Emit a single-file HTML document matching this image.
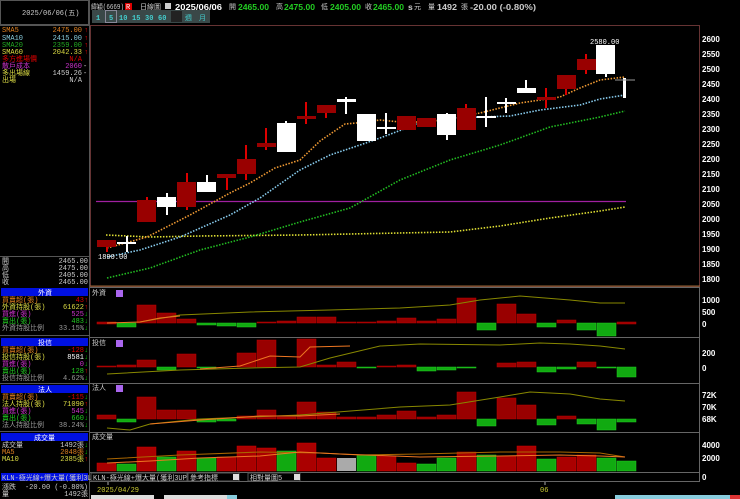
<!DOCTYPE html>
<html><head><meta charset="utf-8">
<style>
html,body{margin:0;padding:0;background:#000;width:740px;height:499px;overflow:hidden}
svg{display:block}
text{font-family:"Liberation Mono","Noto Sans CJK TC",monospace;font-size:7px}
.b{font-family:"Liberation Sans","Noto Sans CJK TC",sans-serif;font-weight:bold;font-size:8.5px}
.ax{font-family:"Liberation Sans",sans-serif;font-weight:bold;font-size:8px;fill:#fff}
</style></head><body>
<svg width="740" height="499" viewBox="0 0 740 499" xmlns="http://www.w3.org/2000/svg">
<rect width="740" height="499" fill="#000"/>
<!-- left panel -->
<rect x="0.5" y="0.5" width="88" height="24" fill="#000" stroke="#555"/>
<text x="22" y="15" fill="#ccc">2025/06/06(五)</text>
<line x1="0" y1="25.5" x2="89" y2="25.5" stroke="#555"/>
<line x1="89.5" y1="0" x2="89.5" y2="499" stroke="#555"/>
<g>
<text x="2" y="32" fill="#e08020">SMA5</text><text x="82" y="32" fill="#e08020" text-anchor="end">2475.00</text><text x="84" y="32" fill="#f00">↑</text>
<text x="2" y="40" fill="#8cd">SMA10</text><text x="82" y="40" fill="#8cd" text-anchor="end">2415.00</text><text x="84" y="40" fill="#f00">↑</text>
<text x="2" y="47" fill="#2a2">SMA20</text><text x="82" y="47" fill="#2a2" text-anchor="end">2359.00</text><text x="84" y="47" fill="#f00">↑</text>
<text x="2" y="54" fill="#dd4">SMA60</text><text x="82" y="54" fill="#dd4" text-anchor="end">2042.33</text><text x="84" y="54" fill="#f00">↑</text>
<text x="2" y="61" fill="#d00">多方進場價</text><text x="82" y="61" fill="#d00" text-anchor="end">N/A</text>
<text x="2" y="68" fill="#c3c">散戶成本</text><text x="82" y="68" fill="#c3c" text-anchor="end">2060</text><text x="83" y="68" fill="#ccc">-</text>
<text x="2" y="75" fill="#dd4">多出場線</text><text x="82" y="75" fill="#ccc" text-anchor="end">1459.26</text><text x="83" y="75" fill="#ccc">-</text>
<text x="2" y="82" fill="#dd4">出場</text><text x="82" y="82" fill="#ccc" text-anchor="end">N/A</text>
</g>
<line x1="0" y1="256.5" x2="89" y2="256.5" stroke="#555"/>
<text x="2" y="263" fill="#ccc">開</text><text x="88" y="263" fill="#ccc" text-anchor="end">2465.00</text>
<text x="2" y="270" fill="#ccc">高</text><text x="88" y="270" fill="#ccc" text-anchor="end">2475.00</text>
<text x="2" y="277" fill="#ccc">低</text><text x="88" y="277" fill="#ccc" text-anchor="end">2405.00</text>
<text x="2" y="284" fill="#ccc">收</text><text x="88" y="284" fill="#ccc" text-anchor="end">2465.00</text>
<!-- 外資 -->
<rect x="1" y="288" width="87" height="8" fill="#0010e0"/><text x="38" y="295" fill="#fff">外資</text>
<text x="2" y="302" fill="#e08020">買賣超(張)</text><text x="84" y="302" fill="#d00" text-anchor="end">43</text><text x="84" y="302" fill="#f00">↑</text>
<text x="2" y="309" fill="#dd4">外資持股(張)</text><text x="84" y="309" fill="#dd4" text-anchor="end">61622</text><text x="84" y="309" fill="#f00">↑</text>
<text x="2" y="316" fill="#c3c">買進(張)</text><text x="84" y="316" fill="#c3c" text-anchor="end">525</text><text x="84" y="316" fill="#0c0">↓</text>
<text x="2" y="323" fill="#2c2">賣出(張)</text><text x="84" y="323" fill="#2c2" text-anchor="end">483</text><text x="84" y="323" fill="#0c0">↓</text>
<text x="2" y="330" fill="#999">外資持股比例</text><text x="84" y="330" fill="#999" text-anchor="end">33.15%</text><text x="84" y="330" fill="#0c0">↓</text>
<line x1="0" y1="335.5" x2="89" y2="335.5" stroke="#555"/>
<!-- 投信 -->
<rect x="1" y="338" width="87" height="8" fill="#0010e0"/><text x="38" y="345" fill="#fff">投信</text>
<text x="2" y="352" fill="#e08020">買賣超(張)</text><text x="84" y="352" fill="#d00" text-anchor="end">-128</text><text x="84" y="352" fill="#0c0">↓</text>
<text x="2" y="359" fill="#dd4">投信持股(張)</text><text x="84" y="359" fill="#fff" text-anchor="end">8581</text><text x="84" y="359" fill="#0c0">↓</text>
<text x="2" y="366" fill="#c3c">買進(張)</text><text x="84" y="366" fill="#c3c" text-anchor="end">0</text><text x="84" y="366" fill="#0c0">↓</text>
<text x="2" y="373" fill="#2c2">賣出(張)</text><text x="84" y="373" fill="#2c2" text-anchor="end">128</text><text x="84" y="373" fill="#f00">↑</text>
<text x="2" y="380" fill="#999">投信持股比例</text><text x="84" y="380" fill="#999" text-anchor="end">4.62%</text><text x="84" y="380" fill="#0c0">↓</text>
<line x1="0" y1="383.5" x2="89" y2="383.5" stroke="#555"/>
<!-- 法人 -->
<rect x="1" y="385" width="87" height="8" fill="#0010e0"/><text x="38" y="392" fill="#fff">法人</text>
<text x="2" y="399" fill="#e08020">買賣超(張)</text><text x="84" y="399" fill="#d00" text-anchor="end">-115</text><text x="84" y="399" fill="#0c0">↓</text>
<text x="2" y="406" fill="#dd4">法人持股(張)</text><text x="84" y="406" fill="#dd4" text-anchor="end">71090</text><text x="84" y="406" fill="#f00">↑</text>
<text x="2" y="413" fill="#c3c">買進(張)</text><text x="84" y="413" fill="#c3c" text-anchor="end">545</text><text x="84" y="413" fill="#0c0">↓</text>
<text x="2" y="420" fill="#2c2">賣出(張)</text><text x="84" y="420" fill="#2c2" text-anchor="end">660</text><text x="84" y="420" fill="#0c0">↓</text>
<text x="2" y="427" fill="#999">法人持股比例</text><text x="84" y="427" fill="#999" text-anchor="end">38.24%</text><text x="84" y="427" fill="#0c0">↓</text>
<line x1="0" y1="431.5" x2="89" y2="431.5" stroke="#555"/>
<!-- 成交量 -->
<rect x="1" y="433" width="87" height="8" fill="#0010e0"/><text x="34" y="440" fill="#fff">成交量</text>
<text x="2" y="447" fill="#ccc">成交量</text><text x="84" y="447" fill="#ccc" text-anchor="end">1492張</text><text x="84" y="447" fill="#0c0">↓</text>
<text x="2" y="454" fill="#e08020">MA5</text><text x="84" y="454" fill="#e08020" text-anchor="end">2048張</text><text x="84" y="454" fill="#0c0">↓</text>
<text x="2" y="461" fill="#dd4">MA10</text><text x="84" y="461" fill="#dd4" text-anchor="end">2385張</text><text x="84" y="461" fill="#f00">↑</text>
<rect x="1" y="473" width="87" height="8" fill="#0010e0"/><text x="2" y="480" fill="#ccc" font-size="6.5">KLN-極光線+爆大量(獲利3UP)</text>
<text x="2" y="489" fill="#ccc">漲跌</text><text x="88" y="489" fill="#ccc" text-anchor="end">-20.00 (-0.80%)</text>
<text x="2" y="496" fill="#ccc">量</text><text x="88" y="496" fill="#ccc" text-anchor="end">1492張</text>

<!-- header -->
<text x="91" y="9" fill="#ccc" textLength="33" lengthAdjust="spacingAndGlyphs">緯穎(6669)</text>
<rect x="125" y="3" width="7" height="7" fill="#d00"/><text x="126" y="9" fill="#fff" font-size="6">R</text>
<text x="140" y="9" fill="#ccc">日線圖</text>
<rect x="165" y="3" width="6" height="6" fill="#ccc"/>
<text x="175" y="10" class="b" fill="#fff" font-size="9.5" textLength="47" lengthAdjust="spacingAndGlyphs">2025/06/06</text>
<text x="229" y="9" fill="#ccc">開</text><text x="238" y="10" class="b" fill="#2c2" textLength="31" lengthAdjust="spacingAndGlyphs">2465.00</text>
<text x="276" y="9" fill="#ccc">高</text><text x="284" y="10" class="b" fill="#2c2" textLength="31" lengthAdjust="spacingAndGlyphs">2475.00</text>
<text x="321" y="9" fill="#ccc">低</text><text x="330" y="10" class="b" fill="#2c2" textLength="31" lengthAdjust="spacingAndGlyphs">2405.00</text>
<text x="365" y="9" fill="#ccc">收</text><text x="373" y="10" class="b" fill="#2c2" textLength="31" lengthAdjust="spacingAndGlyphs">2465.00</text>
<text x="408" y="10" class="b" fill="#ccc">s</text><text x="414" y="9" fill="#ccc">元</text>
<text x="428" y="9" fill="#ccc">量</text><text x="437" y="10" class="b" fill="#ccc" textLength="20" lengthAdjust="spacingAndGlyphs">1492</text><text x="461" y="9" fill="#ccc">張</text>
<text x="470" y="10" class="b" fill="#ccc" textLength="66" lengthAdjust="spacingAndGlyphs">-20.00 (-0.80%)</text>
<!-- toolbar -->
<rect x="92" y="10" width="118" height="13" fill="#3a4848"/>
<g fill="#4cc" font-size="8.5" font-weight="bold">
<text x="96" y="20">1</text><text x="109" y="20">5</text><text x="119" y="20">10</text><text x="132" y="20">15</text><text x="145" y="20">30</text><text x="158" y="20">60</text>
<text x="185" y="20" font-size="6" font-weight="normal">週</text><text x="199" y="20" font-size="6" font-weight="normal">月</text></g>
<rect x="171" y="11" width="11" height="11" fill="#222"/>
<rect x="105.5" y="10.5" width="11" height="12" fill="none" stroke="#889"/>

<!-- chart frame -->
<rect x="90.5" y="25.5" width="609" height="261" fill="none" stroke="#633"/>
<line x1="90" y1="286" x2="700" y2="286" stroke="#963"/>
<g stroke="#666"><line x1="90" y1="287.5" x2="700" y2="287.5"/><line x1="90" y1="337.5" x2="700" y2="337.5"/><line x1="90" y1="383.5" x2="700" y2="383.5"/><line x1="90" y1="432.5" x2="700" y2="432.5"/><line x1="90" y1="472.5" x2="700" y2="472.5"/><line x1="90" y1="481.5" x2="700" y2="481.5"/><line x1="699.5" y1="287" x2="699.5" y2="482"/></g>

<!-- axis labels -->
<g class="ax">
<text x="702" y="42" class="ax">2600</text><text x="702" y="57" class="ax">2550</text><text x="702" y="72" class="ax">2500</text><text x="702" y="87" class="ax">2450</text><text x="702" y="102" class="ax">2400</text><text x="702" y="117" class="ax">2350</text><text x="702" y="132" class="ax">2300</text><text x="702" y="147" class="ax">2250</text><text x="702" y="162" class="ax">2200</text><text x="702" y="177" class="ax">2150</text><text x="702" y="192" class="ax">2100</text><text x="702" y="207" class="ax">2050</text><text x="702" y="222" class="ax">2000</text><text x="702" y="237" class="ax">1950</text><text x="702" y="252" class="ax">1900</text><text x="702" y="267" class="ax">1850</text><text x="702" y="282" class="ax">1800</text>
<text x="702" y="303" class="ax">1000</text><text x="702" y="315" class="ax">500</text><text x="702" y="327" class="ax">0</text>
<text x="702" y="356" class="ax">200</text><text x="702" y="371" class="ax">0</text>
<text x="702" y="398" class="ax">72K</text><text x="702" y="410" class="ax">70K</text><text x="702" y="422" class="ax">68K</text>
<text x="702" y="448" class="ax">4000</text><text x="702" y="461" class="ax">2000</text><text x="702" y="480" class="ax">0</text>
</g>

<!-- MA lines -->
<line x1="96" y1="201.5" x2="626" y2="201.5" stroke="#a020a0" stroke-width="1.2"/>
<g fill="none" stroke-width="1.6" stroke-dasharray="1.5 1.5">
<polyline stroke="#dd3" points="106,235 150,237 200,236 300,235 400,233 450,232 500,226 550,218 600,211 625,207"/>
<polyline stroke="#2b2" points="107,278 150,268 200,250 250,237 300,222 350,208 400,180 450,160 500,145 550,127 600,117 625,111"/>
<polyline stroke="#8ce" points="107,257 140,250 180,237 230,215 260,198 300,170 330,155 360,145 380,138 420,123 450,118 480,117 510,116 540,110 580,105 600,99 625,95"/>
<polyline stroke="#e93" points="107,248 147,237 190,215 230,193 250,183 275,168 300,160 320,141 345,124 356,123 380,120 400,122 430,122 480,113 520,103 560,97 580,88 600,80 625,77"/>
</g>

<!-- candles -->
<g>
<g fill="#d00">
<rect x="106" y="240" width="2" height="12"/><rect x="146" y="197" width="2" height="25"/><rect x="186" y="173" width="2" height="37"/><rect x="226" y="174" width="2" height="16"/><rect x="245" y="145" width="2" height="35"/><rect x="265" y="128" width="2" height="22"/><rect x="305" y="102" width="2" height="22"/><rect x="325" y="105" width="2" height="13"/><rect x="465" y="104" width="2" height="26"/><rect x="545" y="88" width="2" height="20"/><rect x="565" y="75" width="2" height="20"/><rect x="585" y="54" width="2" height="20"/>
</g>
<g fill="#900">
<rect x="97" y="240" width="19" height="7"/><rect x="137" y="200" width="19" height="22"/><rect x="177" y="182" width="19" height="25"/><rect x="217" y="174" width="19" height="4"/><rect x="237" y="159" width="19" height="15"/><rect x="257" y="143" width="19" height="4"/><rect x="297" y="116" width="19" height="3"/><rect x="317" y="105" width="19" height="8"/><rect x="397" y="116" width="19" height="14"/><rect x="417" y="118" width="19" height="9"/><rect x="457" y="108" width="19" height="22"/><rect x="537" y="97" width="19" height="3"/><rect x="557" y="75" width="19" height="14"/><rect x="577" y="59" width="19" height="11"/>
</g>
<g fill="#fff">
<rect x="126" y="236" width="2" height="16"/><rect x="117" y="242" width="19" height="2"/>
<rect x="166" y="193" width="2" height="22"/><rect x="157" y="197" width="19" height="10"/>
<rect x="206" y="175" width="2" height="17"/><rect x="197" y="182" width="19" height="10"/>
<rect x="285" y="121" width="2" height="31"/><rect x="277" y="123" width="19" height="29"/>
<rect x="345" y="97" width="2" height="17"/><rect x="337" y="99" width="19" height="3"/>
<rect x="357" y="114" width="19" height="27"/>
<rect x="385" y="113" width="2" height="21"/><rect x="377" y="127" width="19" height="2"/>
<rect x="446" y="113" width="2" height="27"/><rect x="437" y="114" width="19" height="21"/>
<rect x="485" y="97" width="2" height="30"/><rect x="477" y="116" width="19" height="2"/>
<rect x="505" y="98" width="2" height="15"/><rect x="497" y="102" width="19" height="2"/>
<rect x="525" y="80" width="2" height="13"/><rect x="517" y="88" width="19" height="5"/>
<rect x="605" y="45" width="2" height="32"/><rect x="596" y="45" width="19" height="29"/>
<rect x="623" y="78" width="3" height="20"/>
</g>
<line x1="615" y1="80" x2="635" y2="80" stroke="#999"/>
<text x="590" y="44" fill="#fff" font-family="Liberation Sans" font-size="8">2580.00</text>
<text x="98" y="259" fill="#fff" font-family="Liberation Sans" font-size="8">1890.00</text>
</g>

<!-- panel labels -->
<text x="92" y="295" fill="#ccc">外資</text><rect x="116" y="290" width="7" height="7" fill="#a6e"/>
<text x="92" y="345" fill="#ccc">投信</text><rect x="116" y="340" width="7" height="7" fill="#a6e"/>
<text x="92" y="390" fill="#ccc">法人</text><rect x="116" y="385" width="7" height="7" fill="#a6e"/>
<text x="92" y="439" fill="#ccc">成交量</text>

<!-- panel 1 -->
<g fill="#900" stroke="#b00" stroke-width="0.5">
<rect x="97" y="322" width="19" height="2"/><rect x="137" y="305" width="19" height="18"/><rect x="157" y="313" width="19" height="10"/><rect x="177" y="319" width="19" height="4"/><rect x="257" y="322" width="19" height="1"/><rect x="277" y="321" width="19" height="2"/><rect x="297" y="317" width="19" height="6"/><rect x="317" y="317" width="19" height="6"/><rect x="337" y="322" width="19" height="1"/><rect x="357" y="322" width="19" height="1"/><rect x="377" y="321" width="19" height="2"/><rect x="397" y="318" width="19" height="5"/><rect x="417" y="321" width="19" height="2"/><rect x="437" y="319" width="19" height="4"/><rect x="457" y="298" width="19" height="25"/><rect x="497" y="304" width="19" height="19"/><rect x="517" y="314" width="19" height="9"/><rect x="557" y="320" width="19" height="3"/><rect x="617" y="322" width="19" height="2"/>
</g>
<g fill="#1a1" stroke="#2c2" stroke-width="0.5">
<rect x="117" y="323" width="19" height="4"/><rect x="197" y="323" width="19" height="2"/><rect x="217" y="323" width="19" height="3"/><rect x="237" y="323" width="19" height="4"/><rect x="477" y="323" width="19" height="7"/><rect x="537" y="323" width="19" height="4"/><rect x="577" y="323" width="19" height="7"/><rect x="597" y="323" width="19" height="13"/>
</g>
<polyline fill="none" stroke="#880" points="140,322 180,315 250,312 330,310 400,308 450,305 480,300 520,296 570,300 600,303 625,303"/>
<polyline fill="none" stroke="#e72" points="107,323 140,322 160,318 180,316"/>

<!-- panel 2 -->
<g fill="#900" stroke="#b00" stroke-width="0.5">
<rect x="97" y="366" width="19" height="1"/><rect x="117" y="365" width="19" height="2"/><rect x="137" y="360" width="19" height="7"/><rect x="177" y="354" width="19" height="13"/><rect x="237" y="353" width="19" height="14"/><rect x="257" y="340" width="19" height="27"/><rect x="297" y="339" width="19" height="28"/><rect x="317" y="365" width="19" height="2"/><rect x="337" y="362" width="19" height="5"/><rect x="377" y="366" width="19" height="1"/><rect x="397" y="365" width="19" height="2"/><rect x="497" y="363" width="19" height="4"/><rect x="517" y="362" width="19" height="5"/><rect x="577" y="362" width="19" height="5"/>
</g>
<g fill="#1a1" stroke="#2c2" stroke-width="0.5">
<rect x="157" y="367" width="19" height="3"/><rect x="197" y="367" width="19" height="1"/><rect x="357" y="367" width="19" height="1"/><rect x="417" y="367" width="19" height="4"/><rect x="437" y="367" width="19" height="3"/><rect x="457" y="367" width="19" height="1"/><rect x="537" y="367" width="19" height="5"/><rect x="557" y="367" width="19" height="2"/><rect x="597" y="367" width="19" height="1"/><rect x="617" y="367" width="19" height="10"/>
</g>
<polyline fill="none" stroke="#880" points="107,374 180,370 250,368 300,367 330,358 380,346 420,344 500,345 540,343 570,344 600,346 625,349"/>
<polyline fill="none" stroke="#e72" points="200,369 240,366 270,356 300,357 310,347 350,346"/>

<!-- panel 3 -->
<g fill="#900" stroke="#b00" stroke-width="0.5">
<rect x="97" y="415" width="19" height="4"/><rect x="137" y="397" width="19" height="22"/><rect x="157" y="410" width="19" height="9"/><rect x="177" y="410" width="19" height="9"/><rect x="237" y="416" width="19" height="3"/><rect x="257" y="410" width="19" height="9"/><rect x="277" y="417" width="19" height="2"/><rect x="297" y="402" width="19" height="17"/><rect x="317" y="412" width="19" height="7"/><rect x="337" y="417" width="19" height="2"/><rect x="357" y="417" width="19" height="2"/><rect x="377" y="415" width="19" height="4"/><rect x="397" y="411" width="19" height="8"/><rect x="417" y="417" width="19" height="2"/><rect x="437" y="415" width="19" height="4"/><rect x="457" y="392" width="19" height="27"/><rect x="497" y="398" width="19" height="21"/><rect x="517" y="405" width="19" height="14"/><rect x="557" y="416" width="19" height="3"/>
</g>
<g fill="#1a1" stroke="#2c2" stroke-width="0.5">
<rect x="117" y="419" width="19" height="3"/><rect x="197" y="419" width="19" height="3"/><rect x="217" y="419" width="19" height="2"/><rect x="477" y="419" width="19" height="7"/><rect x="537" y="419" width="19" height="6"/><rect x="577" y="419" width="19" height="5"/><rect x="597" y="419" width="19" height="11"/><rect x="617" y="419" width="19" height="3"/>
</g>
<polyline fill="none" stroke="#880" points="107,428 130,430 150,424 200,419 300,415 400,407 450,405 500,397 530,392 570,394 600,399 625,401"/>
<polyline fill="none" stroke="#e72" points="150,424 200,420 260,416 300,416 340,414"/>

<!-- panel 4 -->
<g fill="#a00" stroke="#c00" stroke-width="0.5">
<rect x="97" y="463" width="19" height="8"/><rect x="137" y="447" width="19" height="24"/><rect x="177" y="451" width="19" height="20"/><rect x="217" y="457" width="19" height="14"/><rect x="237" y="446" width="19" height="25"/><rect x="257" y="448" width="19" height="23"/><rect x="297" y="443" width="19" height="28"/><rect x="317" y="458" width="19" height="13"/><rect x="377" y="456" width="19" height="15"/><rect x="397" y="463" width="19" height="8"/><rect x="457" y="452" width="19" height="19"/><rect x="497" y="456" width="19" height="15"/><rect x="517" y="446" width="19" height="25"/><rect x="557" y="457" width="19" height="14"/><rect x="577" y="455" width="19" height="16"/>
</g>
<g fill="#1a1" stroke="#2c2" stroke-width="0.5">
<rect x="117" y="464" width="19" height="7"/><rect x="157" y="457" width="19" height="14"/><rect x="197" y="458" width="19" height="13"/><rect x="277" y="451" width="19" height="20"/><rect x="357" y="455" width="19" height="16"/><rect x="417" y="464" width="19" height="7"/><rect x="437" y="458" width="19" height="13"/><rect x="477" y="455" width="19" height="16"/><rect x="537" y="459" width="19" height="12"/><rect x="597" y="458" width="19" height="13"/><rect x="617" y="461" width="19" height="10"/>
</g>
<rect x="337" y="458" width="19" height="13" fill="#aaa"/>
<polyline fill="none" stroke="#a60" points="107,459 180,455 260,452 320,453 360,455 420,454 500,452 560,452 600,453 625,457"/>
<polyline fill="none" stroke="#e72" points="107,463 150,461 200,458 260,456 300,452 340,454 420,457 500,456 560,455 600,456 625,457"/>

<!-- bottom controls -->
<rect x="91" y="473" width="96" height="8" fill="#000" stroke="#555"/>
<text x="93" y="480" fill="#ccc" font-size="6.5">KLN-極光線+爆大量(獲利3UP)</text>
<rect x="188" y="473" width="51" height="8" fill="#000" stroke="#555"/><text x="190" y="480" fill="#ccc" font-size="6.5">參考指標</text><rect x="233" y="474" width="6" height="6" fill="#ddd"/>
<rect x="248" y="473" width="52" height="8" fill="#000" stroke="#555"/><text x="250" y="480" fill="#ccc" font-size="6.5">相對量圖5</text><rect x="294" y="474" width="6" height="6" fill="#ddd"/>
<text x="97" y="492" fill="#cc3" font-family="Liberation Sans" font-size="8">2025/04/29</text>
<line x1="108" y1="482" x2="108" y2="485" stroke="#aaa"/>
<text x="540" y="492" fill="#cc3" font-family="Liberation Sans" font-size="7">06</text>
<line x1="545" y1="482" x2="545" y2="485" stroke="#aaa"/>
<rect x="91" y="495" width="63" height="4" fill="#ddd"/><rect x="164" y="495" width="70" height="4" fill="#ddd"/><rect x="227" y="495" width="10" height="4" fill="#8cd"/>
<rect x="615" y="495" width="125" height="4" fill="#8cd"/><rect x="730" y="495" width="10" height="4" fill="#d33"/>
</svg>
</body></html>
